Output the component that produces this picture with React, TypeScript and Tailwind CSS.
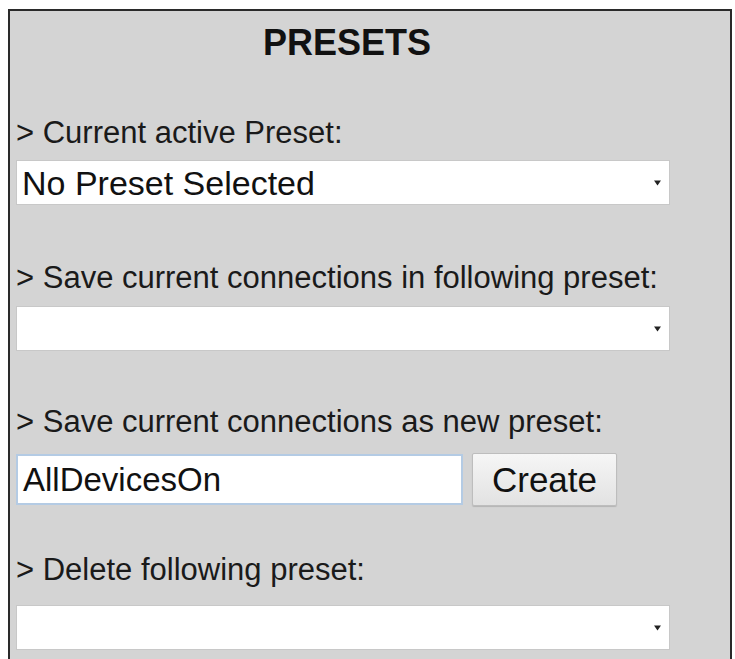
import type { ReactNode } from 'react'

function Caret() {
  return (
    <svg width={7} height={7} viewBox="0 0 7 7" className="shrink-0">
      <path d="M0 1.5h7L3.5 6.5z" fill="#222" />
    </svg>
  )
}

function Label({ children, className = '' }: { children: ReactNode; className?: string }) {
  return (
    <p className={`text-[31px] leading-[34px] text-[#1a1a1a] ${className}`}>{children}</p>
  )
}

function SelectBox({ value, className = '' }: { value?: string; className?: string }) {
  return (
    <div
      className={`w-[654px] h-[45px] flex items-center justify-between pl-[5px] pr-[8px] bg-white border border-[#c8c8c8] ${className}`}
    >
      <span className="text-[34px] text-[#111] leading-none">{value ?? ''}</span>
      <Caret />
    </div>
  )
}

export default function App() {
  return (
    <div className="min-h-[659px] bg-white pt-[9px] pl-[8px]" style={{ fontFamily: '"Liberation Sans", Arial, sans-serif' }}>
      <div className="w-[724px] h-[680px] bg-[#d4d4d4] border-2 border-[#2a2a2a] px-[6px] pt-[11px]">
        <h1 className="text-center font-bold text-[36px] leading-[41px] text-[#111] pr-[46px]">PRESETS</h1>

        <Label className="mt-[53px]">&gt; Current active Preset:</Label>
        <SelectBox value="No Preset Selected" className="mt-[10px]" />

        <Label className="mt-[56px]">&gt; Save current connections in following preset:</Label>
        <SelectBox className="mt-[11px]" />

        <Label className="mt-[54px]">&gt; Save current connections as new preset:</Label>
        <div className="mt-[14px] flex items-center gap-[9px]">
          <div className="w-[447px] h-[51px] flex items-center pl-[5px] bg-white border-2 border-[#b4cbe4]">
            <span className="text-[33px] text-[#111] leading-none">AllDevicesOn</span>
          </div>
          <button className="w-[145px] h-[53px] text-[35px] text-[#111] rounded-[2px] border border-[#bdbdbd] bg-gradient-to-b from-[#f6f6f6] to-[#e2e2e2] shadow-[0_1px_1px_rgba(0,0,0,0.15)]">
            Create
          </button>
        </div>

        <Label className="mt-[47px]">&gt; Delete following preset:</Label>
        <SelectBox className="mt-[18px]" />
      </div>
    </div>
  )
}
